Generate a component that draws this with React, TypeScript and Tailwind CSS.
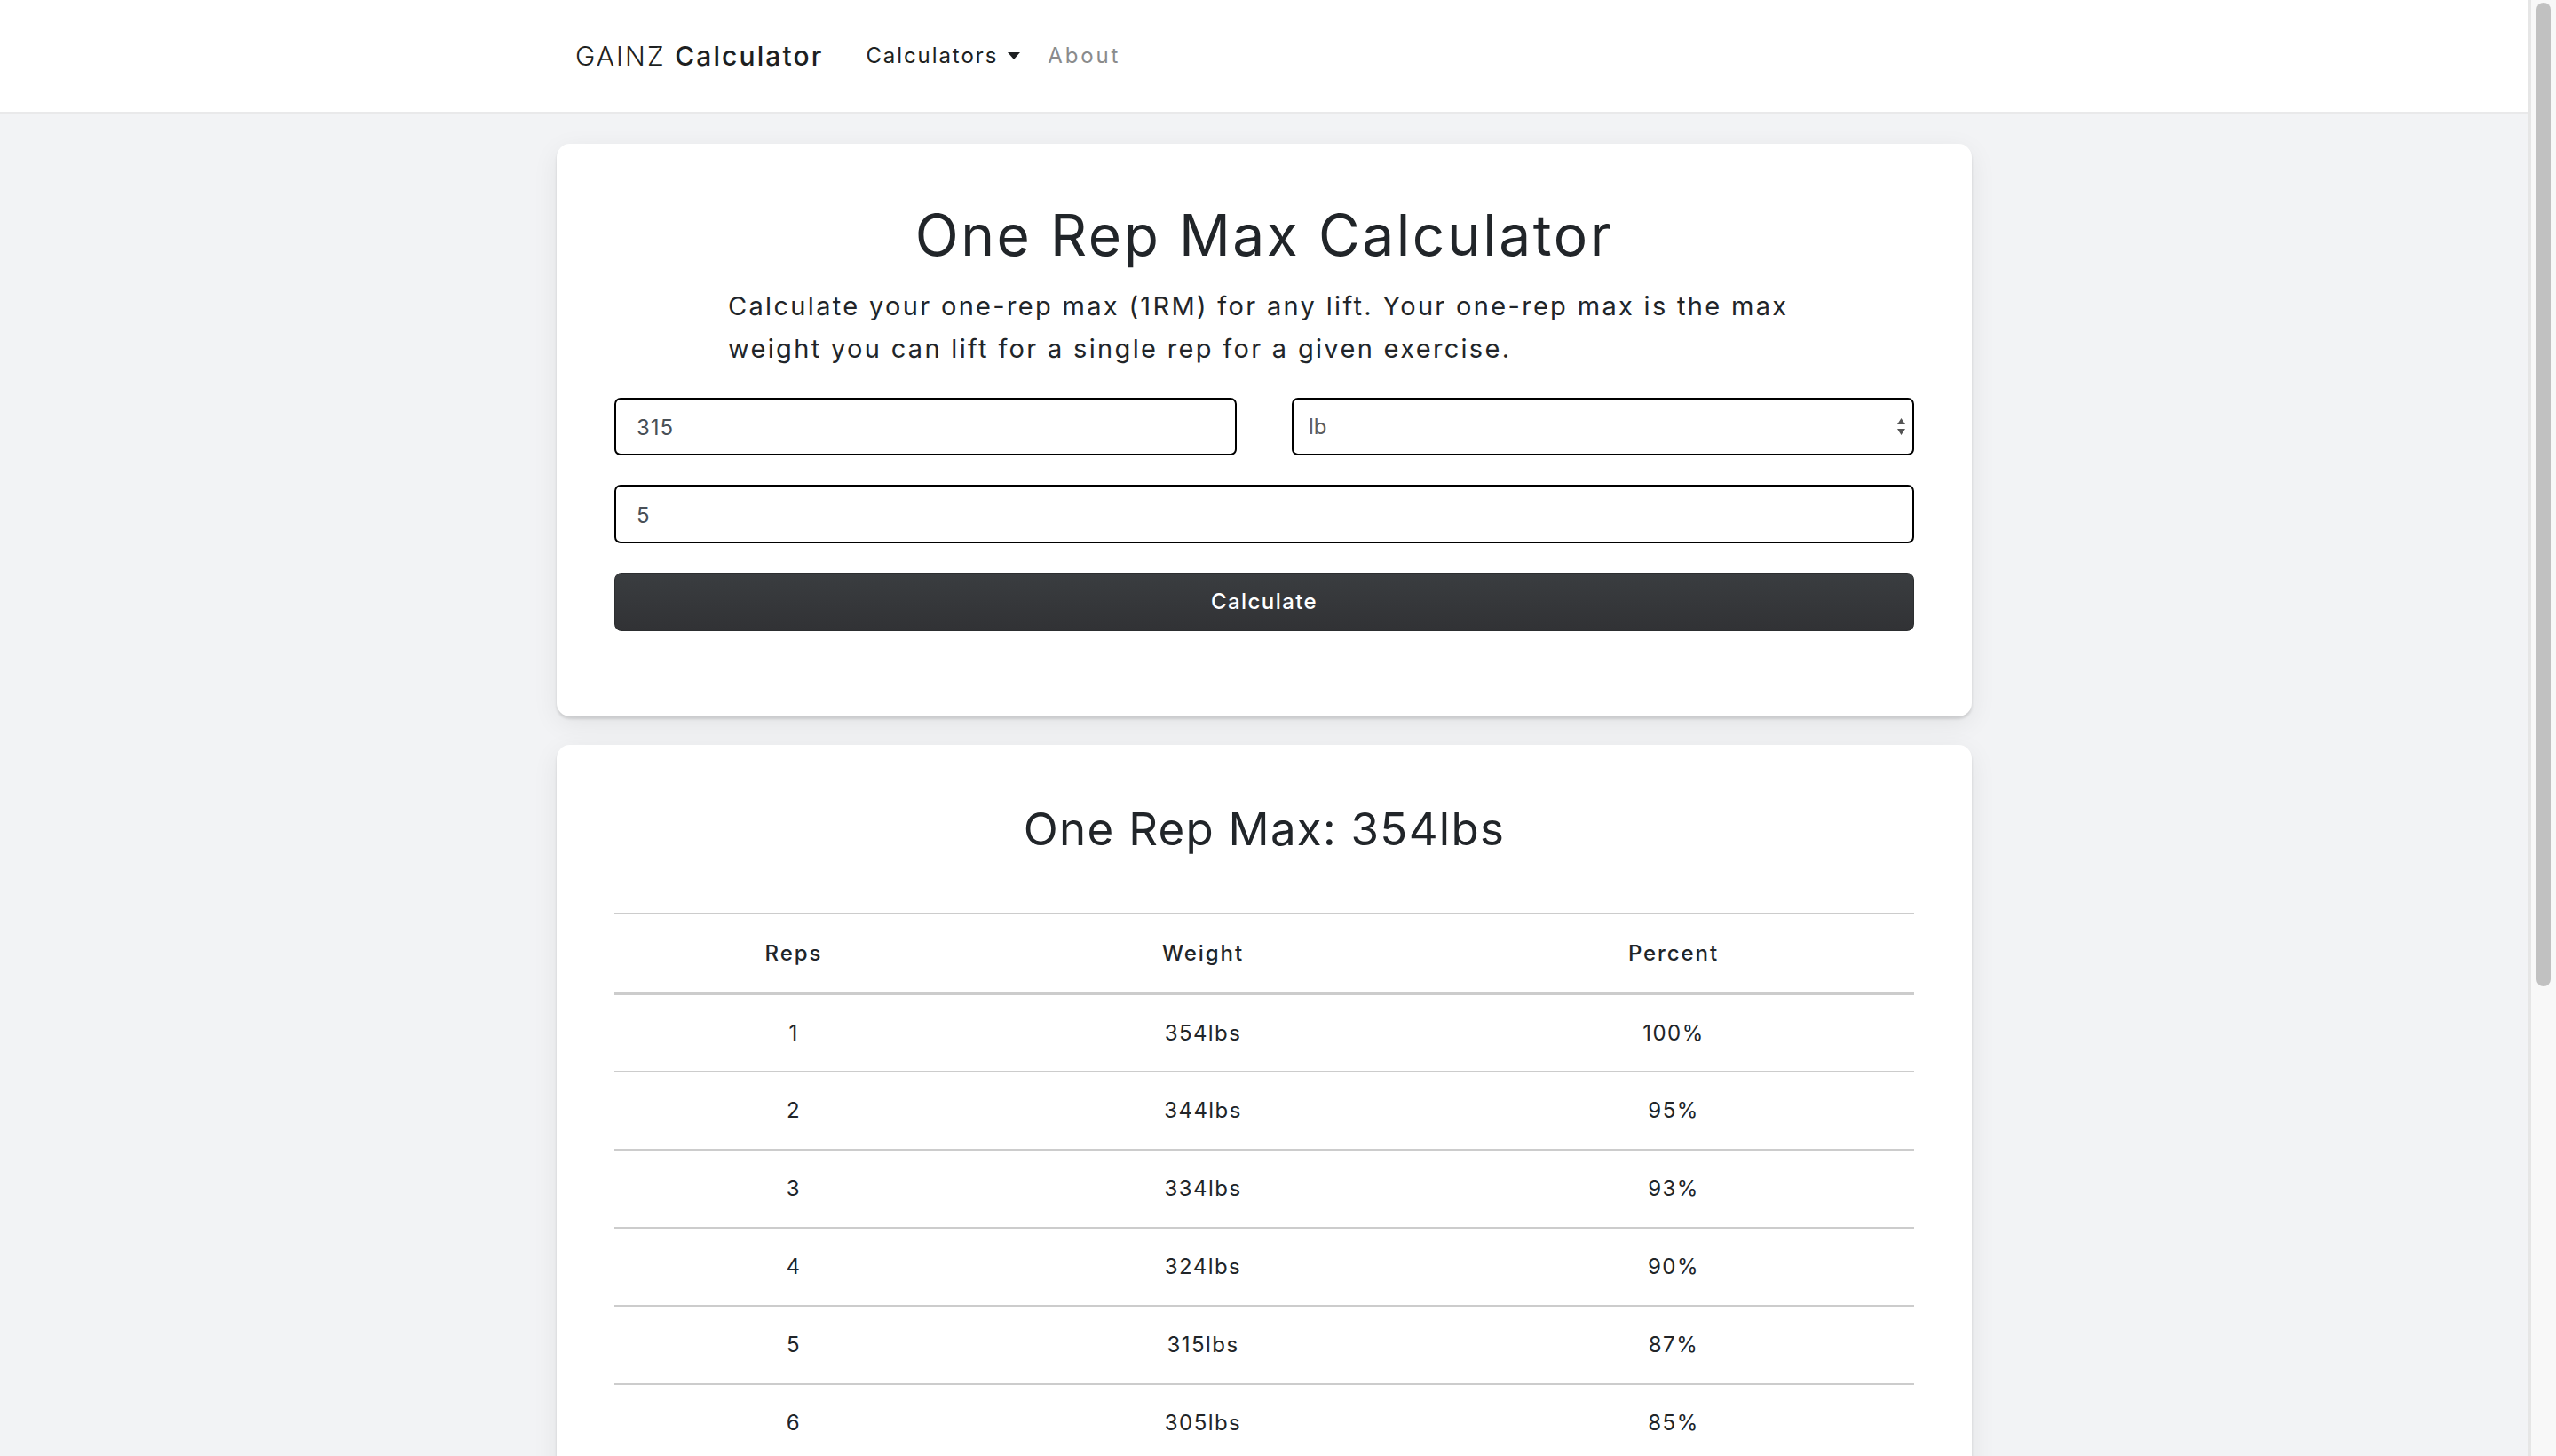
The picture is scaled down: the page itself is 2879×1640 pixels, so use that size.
import type { ReactNode } from "react";

const rows = [
  { reps: 1, weight: "354lbs", percent: "100%" },
  { reps: 2, weight: "344lbs", percent: "95%" },
  { reps: 3, weight: "334lbs", percent: "93%" },
  { reps: 4, weight: "324lbs", percent: "90%" },
  { reps: 5, weight: "315lbs", percent: "87%" },
  { reps: 6, weight: "305lbs", percent: "85%" },
];

function Card({ children, className }: { children: ReactNode; className?: string }) {
  return (
    <section
      className={
        "w-[1594px] rounded-[15px] bg-white px-[65px] pt-[64px] shadow-[0_3px_3px_rgba(0,0,0,0.12),0_8px_30px_rgba(0,0,0,0.07)] " +
        (className ?? "")
      }
    >
      {children}
    </section>
  );
}

function Navbar() {
  return (
    <nav className="h-[128px] shrink-0 border-b-2 border-[#e9e9ea] bg-white">
      <div className="mx-auto flex h-full w-[1594px] items-center px-[21px]">
        <a className="text-[30px] leading-none tracking-[0.07em] text-[#1d1f21]">
          <span className="font-light">GAINZ</span> <span className="font-medium">Calculator</span>
        </a>
        <ul className="ml-[37px] flex items-center text-[24px] leading-none tracking-[0.08em]">
          <li className="flex items-center px-[11px] text-[#1d1f21]">
            Calculators
            <svg className="ml-[11px] h-[8px] w-[14px]" viewBox="0 0 14 8">
              <path d="M0 0h14L7 8z" fill="#1d1f21" />
            </svg>
          </li>
          <li className="pr-[11px] pl-[20px] tracking-[0.12em] text-[#8a8b8c]">About</li>
        </ul>
      </div>
    </nav>
  );
}

function CalculatorCard() {
  return (
    <Card className="pb-[96px]">
      <h1 className="text-center text-[64px] leading-[77px] font-normal tracking-[0.04em] text-[#212529]">
        One Rep Max Calculator
      </h1>
      <p className="mx-auto mt-[18px] w-[1208px] text-[29px] leading-[48px] tracking-[0.08em] text-[#212529]">
        Calculate your one-rep max (1RM) for any lift. Your one-rep max is the max weight you can lift for a single rep for a given exercise.
      </p>
      <form className="mt-[31px] flex flex-col gap-[33px]" onSubmit={(e) => e.preventDefault()}>
        <div className="grid grid-cols-2 gap-[62px]">
          <input
            defaultValue="315"
            className="h-[65px] rounded-[7px] border-2 border-black px-[23px] pt-[2px] text-[24px] tracking-[0.04em] text-[#495057] outline-none"
          />
          <div className="relative">
            <select
              defaultValue="lb"
              className="h-[65px] w-full appearance-none rounded-[7px] border-2 border-black bg-white px-[17px] text-[24px] text-[#5a5d60] outline-none"
            >
              <option value="lb">lb</option>
              <option value="kg">kg</option>
            </select>
            <svg className="pointer-events-none absolute top-[23px] right-[10px] h-[20px] w-[9px]" viewBox="0 0 9 20">
              <path d="M4.5 0L9 7H0z M0 12h9L4.5 19z" fill="#555" />
            </svg>
          </div>
        </div>
        <input
          defaultValue="5"
          className="h-[66px] rounded-[7px] border-2 border-black px-[23px] pt-[2px] text-[24px] text-[#495057] outline-none"
        />
        <button className="h-[66px] rounded-[8px] border border-[#2c2e30] bg-[linear-gradient(180deg,#3a3d40,#313235)] text-[24px] font-medium tracking-[0.06em] text-white">
          Calculate
        </button>
      </form>
    </Card>
  );
}

function ResultCard() {
  return (
    <Card className="mt-[32px] pb-[64px]">
      <h2 className="text-center text-[51px] leading-[61px] font-normal tracking-[0.025em] text-[#212529]">
        One Rep Max: 354lbs
      </h2>
      <table className="mt-[64px] w-full border-collapse text-center text-[24px] tracking-[0.06em] text-[#212529]">
        <thead>
          <tr className="h-[90px] border-t-2 border-b-4 border-[#cccccc] tracking-[0.08em]">
            <th className="w-[404px] font-medium">Reps</th>
            <th className="w-[518px] font-medium">Weight</th>
            <th className="w-[542px] font-medium">Percent</th>
          </tr>
        </thead>
        <tbody>
          {rows.map((row) => (
            <tr key={row.reps} className="h-[88px] border-b-2 border-[#cccccc]">
              <td>{row.reps}</td>
              <td>{row.weight}</td>
              <td>{row.percent}</td>
            </tr>
          ))}
        </tbody>
      </table>
    </Card>
  );
}

export default function App() {
  return (
    <div className="flex h-[1640px] w-full overflow-hidden bg-[#f2f3f5] font-['Inter',_sans-serif]">
      <div className="flex min-w-0 flex-1 flex-col">
        <Navbar />
        <main className="flex flex-col items-center pt-[34px]">
          <CalculatorCard />
          <ResultCard />
        </main>
      </div>
      <div className="w-[31px] shrink-0 border-l-[3px] border-[#e6e6e6] bg-[#f8f8f8] pt-[3px] pl-[6px]">
        <div className="h-[1108px] w-[16px] rounded-full bg-[#c1c1c1]" />
      </div>
    </div>
  );
}
